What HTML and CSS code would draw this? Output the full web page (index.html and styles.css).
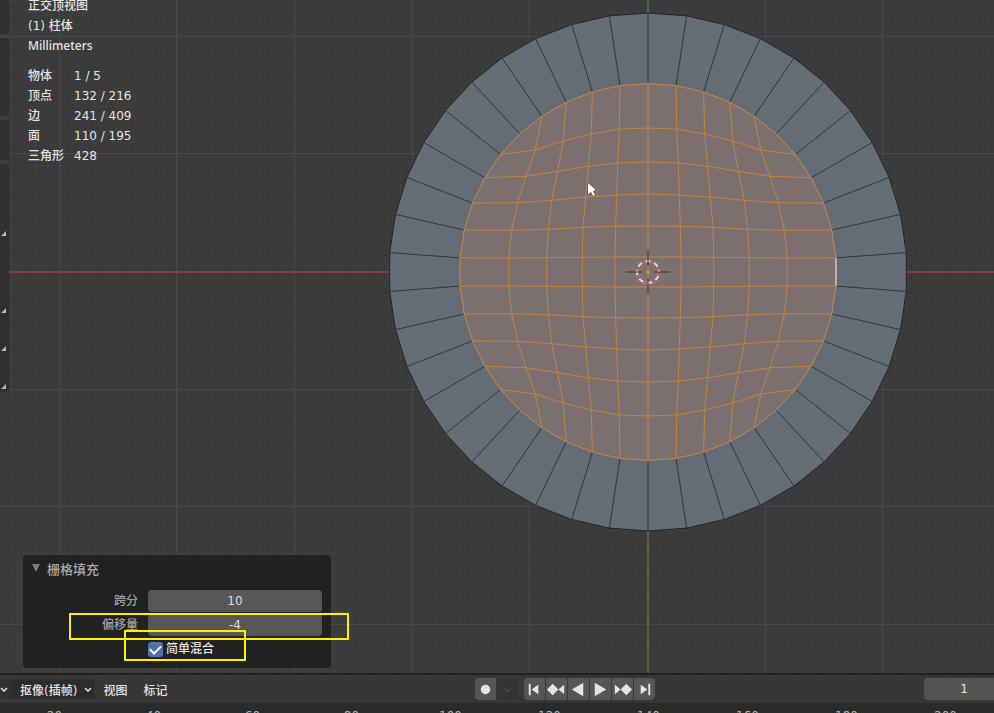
FILE: index.html
```html
<!DOCTYPE html>
<html lang="zh-CN">
<head>
    <meta charset="UTF-8" />
    <meta name="viewport" content="width=device-width, initial-scale=1.0"/>
    <title>栅格填充</title>

    <link rel="stylesheet" href="styles.css">
</head>
<body>

<!-- 3D 视图 -->
<main class="viewport">
    <svg class="scene" id="scene" aria-label="正交顶视图">
        <g transform="translate(648 272)">
            <g id="grid"></g>
            <path class="axis-x" d="M-648 0H1400"/>
            <path class="axis-y" d="M0 -272V1000"/>
            <g id="mesh"></g>

            <!-- 3D 游标 -->
            <circle class="cursor-ring" r="11"/>
            <circle class="cursor-ring dashed" r="11"/>
            <path class="cursor-cross" d="M-22 0H-6M6 0H22M0 -22V-6M0 6V22"/>
            <circle class="origin" r="2"/>
            <path class="pointer" d="M-60 -89v11l3 -2 2 4 2 -1 -2 -4 3 -1z"/>
        </g>
    </svg>

    <aside class="toolbar">
        <div class="tool-group small"></div>
        <div class="tool-group medium"></div>
        <div class="tool-group short"></div>
        <div class="tool-group large">
            <svg viewBox="0 0 10 228" width="10" height="228">
                <path d="M1 72h5v-5zM1 149h5v-5zM1 187h5v-5zM1 225h5v-5z"/>
            </svg>
        </div>
    </aside>

    <section class="overlay-text">
        <div>正交顶视图</div>
        <div>(1) 柱体</div>
        <div class="units">Millimeters</div>
        <table class="stats">
            <tr><th scope="row">物体</th><td>1 / 5</td></tr>
            <tr><th scope="row">顶点</th><td>132 / 216</td></tr>
            <tr><th scope="row">边</th><td>241 / 409</td></tr>
            <tr><th scope="row">面</th><td>110 / 195</td></tr>
            <tr><th scope="row">三角形</th><td>428</td></tr>
        </table>
    </section>

    <!-- 操作面板 -->
    <section class="panel">
        <button class="panel-title" type="button" aria-expanded="true">
            <svg viewBox="0 0 8 8" width="8" height="8"><path d="M0 0h8L4 8z"/></svg>
            栅格填充
        </button>
        <div class="panel-body">
            <label for="span">跨分</label>
            <input class="field" type="text" id="span" value="10"/>
            <label for="offset">偏移量</label>
            <input class="field" type="text" id="offset" value="-4"/>
            <label class="check">
                <input type="checkbox" checked/>
                简单混合
            </label>
        </div>
        <div class="mark mark-offset"></div>
        <div class="mark mark-blend"></div>
    </section>
</main>

<!-- 时间线 -->
<footer class="timeline">
    <div class="timeline-bar">
        <nav class="menus">
            <button class="menu-chevron" type="button" aria-label="编辑器类型">
                <svg viewBox="0 0 8 5" width="8" height="5"><path class="chevron" d="M1 1l3 3 3-3"/></svg>
            </button>
            <button class="menu dark" type="button">抠像(插帧)
                <svg viewBox="0 0 8 5" width="8" height="5"><path class="chevron" d="M1 1l3 3 3-3"/></svg>
            </button>
            <button class="menu" type="button">视图</button>
            <button class="menu" type="button">标记</button>
        </nav>
        <div class="record">
            <button type="button" aria-label="自动插帧">
                <svg viewBox="0 0 22 22"><circle cx="11" cy="11" r="5"/></svg>
            </button>
            <button class="muted" type="button" aria-label="插帧选项">
                <svg viewBox="0 0 22 22"><path class="chevron" d="M8 10l3 3 3-3"/></svg>
            </button>
        </div>
        <div class="transport">
            <button type="button" aria-label="跳到起点"><svg viewBox="0 0 22 22"><path d="M5 5h2v12H5zM15 6v10l-7-5z"/></svg></button>
            <button type="button" aria-label="上一关键帧"><svg viewBox="0 0 22 22"><path d="M7 5l6 6-6 6-6-6zM19 6v10l-6-5z"/></svg></button>
            <button type="button" aria-label="倒放"><svg viewBox="0 0 22 22"><path d="M16 4v14L4 11z"/></svg></button>
            <button type="button" aria-label="播放"><svg viewBox="0 0 22 22"><path d="M5 4v14l12-7z"/></svg></button>
            <button type="button" aria-label="下一关键帧"><svg viewBox="0 0 22 22"><path d="M15 5l6 6-6 6-6-6zM3 6v10l6-5z"/></svg></button>
            <button type="button" aria-label="跳到终点"><svg viewBox="0 0 22 22"><path d="M15 5h2v12h-2zM7 6v10l7-5z"/></svg></button>
        </div>
        <input class="frame" type="text" value="1" aria-label="当前帧"/>
    </div>
    <div class="ruler">
        <span>20</span><span>40</span><span>60</span><span>80</span><span>100</span>
        <span>120</span><span>140</span><span>160</span><span>180</span><span>200</span>
    </div>
</footer>

<script src="scene.js"></script>
</body>
</html>
```
FILE: styles.css
```css
* {
    box-sizing: border-box;
}

body {
    margin: 0;
    height: 100vh;
    display: flex;
    flex-direction: column;
    overflow: hidden;
    background: #3b3b3b;
    color: #e4e4e4;
    font-family: "DejaVu Sans", "Noto Sans CJK SC", sans-serif;
    font-size: 12px;
    font-weight: 500;
}

button,
input {
    margin: 0;
    padding: 0;
    border: none;
    color: inherit;
    font: inherit;
}

button {
    background: none;
}

svg {
    display: block;
    fill: currentColor;
}

/* 3D 视图 */
.viewport {
    position: relative;
    flex: 1;
    min-height: 0;
    overflow: hidden;
}

.scene {
    position: absolute;
    width: 100%;
    height: 100%;
    fill: none;
}

.grid-minor {
    stroke: #404040;
}

.grid-major {
    stroke: #4a4a4a;
}

.axis-x {
    stroke: #7e3e4b;
    stroke-width: 2;
}

.axis-y {
    stroke: #566637;
    stroke-width: 2;
}

.ring {
    fill: #646c75;
    stroke: #20262b;
}

.spoke {
    stroke: #30373d;
}

.cap {
    fill: #7c7170;
    stroke: #c98a3e;
}

.wire {
    stroke: #c2853c;
}

.active-edge {
    stroke: #e9e4e0;
}

.cursor-ring {
    stroke: #ddd6d6;
    stroke-width: 2;
}

.cursor-ring.dashed {
    stroke: #bd4b66;
    stroke-dasharray: 4 5;
}

.cursor-cross {
    stroke: #3a3535;
}

.origin {
    fill: #dd8c22;
}

.pointer {
    fill: #fff;
    stroke: #3a3535;
    paint-order: stroke;
}

.toolbar {
    position: absolute;
    top: 0;
    left: 0;
    width: 9px;
    display: flex;
    flex-direction: column;
    gap: 4px;
}

.tool-group {
    background: #303030;
    border-radius: 0 4px 4px 0;
    color: #b8b8b8;
}

.tool-group.small {
    height: 34px;
}

.tool-group.medium {
    height: 78px;
}

.tool-group.short {
    height: 40px;
}

.overlay-text {
    position: absolute;
    top: -4px;
    left: 28px;
    line-height: 20px;
}

.units {
    font-family: "Noto Sans", sans-serif;
}

.stats {
    margin-top: 10px;
    border-collapse: collapse;
}

.stats th,
.stats td {
    padding: 0;
    font-weight: 500;
    text-align: left;
}

.stats th {
    width: 46px;
}

/* 操作面板 */
.panel {
    position: absolute;
    left: 23px;
    bottom: 5px;
    width: 308px;
    padding: 0 9px 8px;
    border-radius: 4px;
    background: #212121;
}

.panel-title {
    display: flex;
    align-items: center;
    gap: 7px;
    height: 26px;
    color: #a8a8a8;
    font-size: 13px;
}

.panel-title svg {
    color: #7d7d7d;
}

.panel-body {
    display: grid;
    grid-template-columns: 106px 1fr;
    column-gap: 10px;
    row-gap: 2px;
    align-items: center;
    padding-top: 9px;
    line-height: 20px;
}

.panel-body label {
    color: #a0a0a0;
    text-align: right;
}

.field {
    width: 100%;
    height: 22px;
    border-radius: 4px;
    background: #575757;
    color: #dedede;
    text-align: center;
}

.panel-body .check {
    grid-column: 2;
    display: flex;
    align-items: center;
    gap: 3px;
    height: 22px;
    color: #e6e6e6;
}

.check input {
    appearance: none;
    width: 15px;
    height: 15px;
    border-radius: 3px;
    background: #4e72ae;
    display: grid;
    place-items: center;
}

.check input:checked::before {
    content: "";
    width: 9px;
    height: 5px;
    border-left: 2px solid #fff;
    border-bottom: 2px solid #fff;
    transform: translateY(-1px) rotate(-45deg);
}

.mark {
    position: absolute;
    border: 2px solid #fff000;
    pointer-events: none;
}

.mark-offset {
    left: 46px;
    bottom: 28px;
    width: 280px;
    height: 27px;
}

.mark-blend {
    left: 101px;
    bottom: 7px;
    width: 122px;
    height: 31px;
}

/* 时间线 */
.timeline {
    border-top: 2px solid #202020;
    background: #2a2a2a;
}

.timeline-bar {
    display: flex;
    align-items: center;
    height: 28px;
    background: #373737;
}

.menus {
    display: flex;
    align-items: center;
    flex: none;
    width: 475px;
}

.menu-chevron {
    width: 12px;
    height: 20px;
    background: #303030;
}

.menu {
    display: flex;
    align-items: center;
    gap: 7px;
    height: 20px;
    padding: 0 8px;
}

.menu.dark {
    padding-right: 3px;
    background: #2c2c2c;
}

.chevron {
    fill: none;
    stroke: currentColor;
    stroke-width: 1.5;
}

.record,
.transport {
    display: flex;
    flex: none;
    gap: 1px;
    margin-right: 6px;
    border-radius: 4px;
    overflow: hidden;
}

.record button,
.transport button {
    width: 21px;
    height: 22px;
    background: #565656;
}

.record .muted {
    background: #323232;
    color: #4c4c4c;
}

.frame {
    width: 70px;
    height: 22px;
    margin-left: auto;
    padding-left: 10px;
    border-radius: 4px 0 0 4px;
    background: #545454;
    text-align: center;
}

.ruler {
    display: flex;
    height: 10px;
    padding-left: 5px;
    overflow: hidden;
    color: #b4b4b4;
    line-height: 26px;
}

.ruler span {
    flex: none;
    width: 99px;
    text-align: center;
}
```
FILE: scene.js
```js
const SEGMENTS = 42;
const OUTER = 259;
const INNER = 188.5;
const GRID_STEP = 11.77;

// Внутренние вершины четверти сетки: строки сверху вниз, столбцы от центра
const QUARTER = [
    [[0, 144], [28.7, 143], [56.7, 138], [85, 131], [112.7, 122]],
    [[0, 110], [30.3, 109], [59.7, 105.7], [90.3, 100.7], [122, 95.7]],
    [[0, 78], [31.3, 77], [62.3, 75], [96.3, 71.7], [130.3, 69.3]],
    [[0, 46], [32.3, 45.7], [65, 44.7], [99.7, 42.7], [136.3, 41.7]],
    [[0, 15], [33, 15], [65.7, 14.7], [101.3, 14.3], [139.3, 14]]
];

function add(parent, tag, className, attrs) {
    const el = document.createElementNS('http://www.w3.org/2000/svg', tag);
    el.setAttribute('class', className);
    for (const name in attrs) {
        el.setAttribute(name, attrs[name]);
    }
    parent.appendChild(el);
}

function rim(k, radius) {
    const a = k * 2 * Math.PI / SEGMENTS;
    return [radius * Math.sin(a), radius * Math.cos(a)];
}

function toPoints(list) {
    return list.map(p => p[0].toFixed(1) + ',' + (-p[1]).toFixed(1)).join(' ');
}

function drawGrid() {
    const grid = document.getElementById('grid');
    let minor = '';
    let major = '';
    for (let i = -60; i <= 120; i++) {
        const v = Math.round(i * GRID_STEP) - 0.5;
        const d = `M${v} -800V1400M-800 ${v}H1400`;
        if (i % 10 === 0) {
            major += d;
        } else {
            minor += d;
        }
    }
    add(grid, 'path', 'grid-minor', { d: minor });
    add(grid, 'path', 'grid-major', { d: major });
}

function drawMesh() {
    const mesh = document.getElementById('mesh');
    const outer = [];
    const inner = [];
    for (let k = 0; k < SEGMENTS; k++) {
        outer.push(rim(k, OUTER));
        inner.push(rim(k, INNER));
    }

    add(mesh, 'polygon', 'ring', { points: toPoints(outer) });
    for (let k = 0; k < SEGMENTS; k++) {
        add(mesh, 'polyline', 'spoke', { points: toPoints([outer[k], inner[k]]) });
    }
    add(mesh, 'polygon', 'cap', { points: toPoints(inner) });

    // Горизонтальные рёбра
    QUARTER.forEach((row, r) => {
        const right = row.concat([inner[6 + r]]);
        const left = right.slice(1).reverse().map(p => [-p[0], p[1]]);
        const line = left.concat(right);
        add(mesh, 'polyline', 'wire', { points: toPoints(line) });
        add(mesh, 'polyline', 'wire', { points: toPoints(line.map(p => [p[0], -p[1]])) });
    });

    // Вертикальные рёбра
    for (let c = 0; c <= 4; c++) {
        const top = [inner[c]].concat(QUARTER.map(row => row[c]));
        const line = top.concat(top.slice().reverse().map(p => [p[0], -p[1]]));
        add(mesh, 'polyline', 'wire', { points: toPoints(line) });
        if (c > 0) {
            add(mesh, 'polyline', 'wire', { points: toPoints(line.map(p => [-p[0], p[1]])) });
        }
    }

    add(mesh, 'polyline', 'active-edge', { points: toPoints([inner[10], inner[11]]) });
}

drawGrid();
drawMesh();
```
